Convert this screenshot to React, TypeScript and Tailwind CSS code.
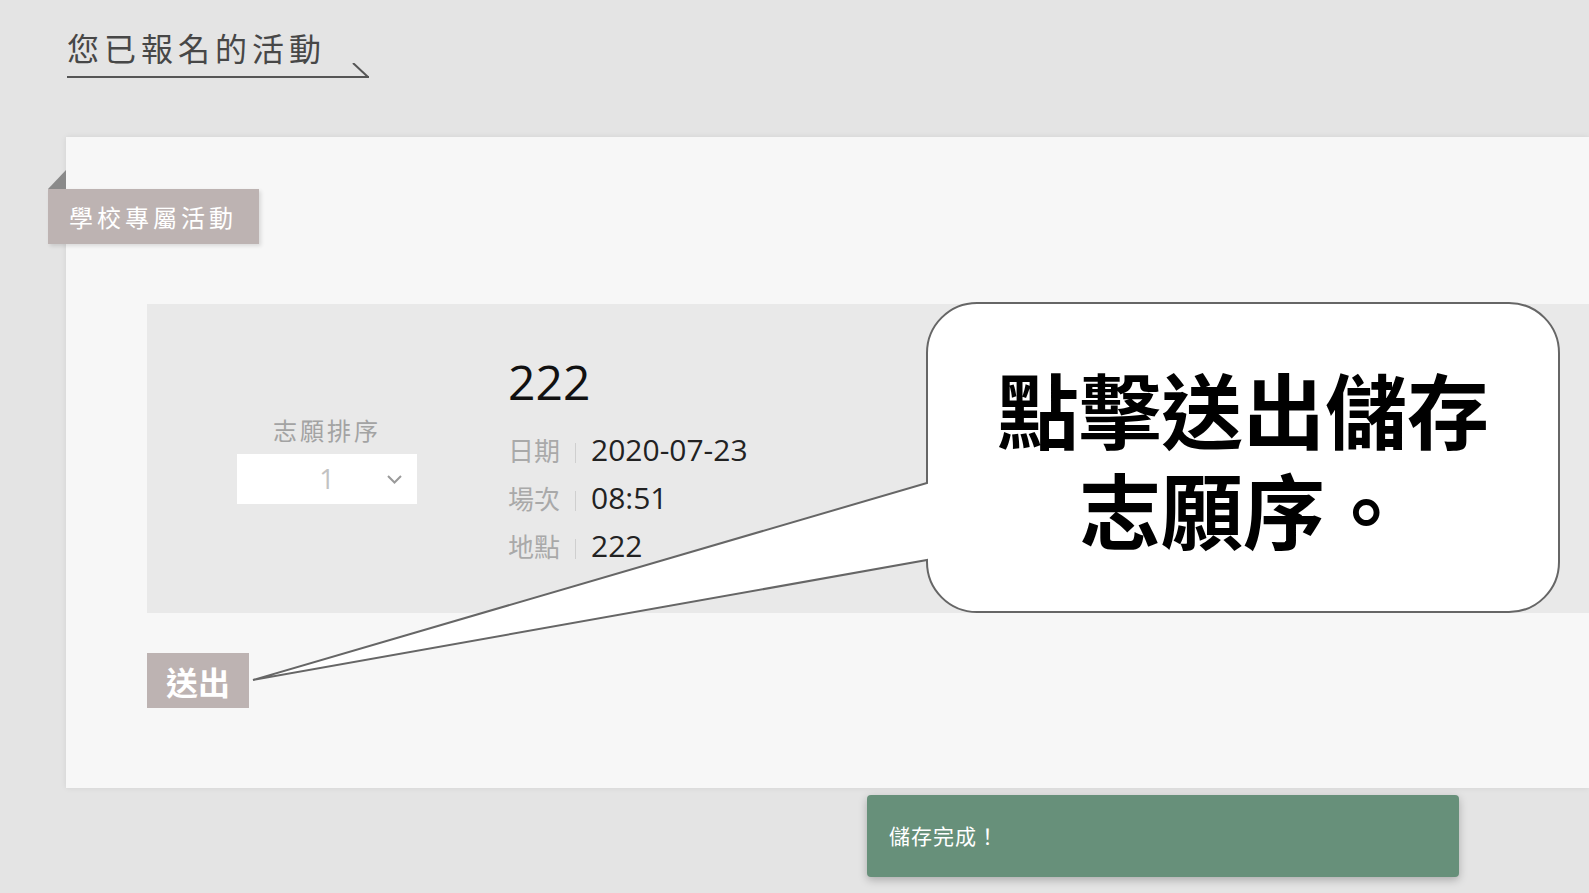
import React from "react";

export default function App() {
  return (
    <div className="relative min-h-screen w-full overflow-hidden bg-[#e4e4e4] font-['Open_Sans','Noto_Sans_CJK_TC',sans-serif]">
      {/* Page heading */}
      <header className="pl-[67px] pt-[31px]">
        <div className="font-['Noto_Sans_CJK_TC',sans-serif] text-[32px] leading-[32px] tracking-[5px] text-[#474747]">
          您已報名的活動
        </div>
        <svg width="303" height="16" viewBox="0 0 303 16" className="block">
          <line x1="0" y1="14" x2="302" y2="14" stroke="#555" strokeWidth="2" />
          <line x1="286" y1="0" x2="301" y2="14" stroke="#555" strokeWidth="2" />
        </svg>
      </header>

      {/* Panel */}
      <section className="ml-[66px] mt-[58px] h-[651px] bg-[#f7f7f7] pt-[52px] shadow-[0_0_6px_rgba(0,0,0,0.08)]">
        <div className="relative -ml-[18px] flex h-[55px] w-[211px] items-center bg-[#bdb3b2] pl-[21px] font-['Noto_Sans_CJK_TC',sans-serif] text-[24px] tracking-[4px] text-white shadow-[2px_2px_4px_rgba(0,0,0,0.12)]">
          <span className="absolute left-0 top-[-19px] h-0 w-0 border-b-[19px] border-l-[18px] border-b-[#8a8a8a] border-l-transparent" />
          學校專屬活動
        </div>

        {/* Activity card */}
        <div className="ml-[81px] mt-[60px] flex h-[309px] items-center bg-[#e9e9e9] pl-[90px]">
          <div className="flex w-[180px] flex-col items-center">
            <div className="font-['Noto_Sans_CJK_TC',sans-serif] text-[24px] leading-[34px] tracking-[3px] text-[#a3a3a3]">
              志願排序
            </div>
            <div className="relative mt-[7px] flex h-[50px] w-[180px] items-center justify-center bg-white">
              <span className="text-[27px] text-[#c2c2c2]">1</span>
              <svg width="15" height="9" viewBox="0 0 15 9" className="absolute right-[15px] top-[21px]">
                <polyline points="1,1 7.5,7.5 14,1" fill="none" stroke="#9a9a9a" strokeWidth="2" />
              </svg>
            </div>
          </div>

          <div className="ml-[91px] flex flex-col pt-[6px]">
            <div className="text-[48px] leading-[56px] text-[#111]">222</div>
            <div className="mt-[16px] flex flex-col">
              {[
                ["日期", "2020-07-23"],
                ["場次", "08:51"],
                ["地點", "222"],
              ].map(([k, v]) => (
                <div key={k} className="h-[48px] text-[30px] leading-[48px] whitespace-nowrap">
                  <span className="font-['Noto_Sans_CJK_TC',sans-serif] text-[26px] text-[#a9a9a9]">{k}</span>
                  <span className="mx-[15px] inline-block h-[20px] w-px bg-[#cfcfcf] align-[-2px]" />
                  <span className="text-[#222]">{v}</span>
                </div>
              ))}
            </div>
          </div>
        </div>

        <button className="ml-[81px] mt-[40px] flex h-[55px] w-[102px] items-center justify-center bg-[#bdb3b2] font-['Noto_Sans_CJK_TC',sans-serif] text-[32px] font-bold text-white">
          送出
        </button>
      </section>

      {/* Callout overlay */}
      <svg
        width="1589"
        height="893"
        viewBox="0 0 1589 893"
        className="pointer-events-none absolute left-0 top-0"
      >
        <path
          d="M977,303 H1509 A50,50 0 0 1 1559,353 V562 A50,50 0 0 1 1509,612 H977 A50,50 0 0 1 927,562 V560 L253,680 L927,483 V353 A50,50 0 0 1 977,303 Z"
          fill="#ffffff"
          stroke="#666666"
          strokeWidth="2"
          strokeLinejoin="miter"
        />
      </svg>
      <div className="pointer-events-none absolute left-[927px] top-[303px] flex h-[309px] w-[632px] flex-col items-center justify-center text-center font-['Noto_Sans_CJK_TC',sans-serif] text-[82px] font-bold leading-[100px] text-black">
        <div className="h-[100px] overflow-visible">點擊送出儲存</div>
        <div className="h-[100px] overflow-visible">志願序。</div>
      </div>

      {/* Toast */}
      <div className="absolute left-[867px] top-[795px] flex h-[82px] w-[592px] items-center rounded-[4px] bg-[#67907a] pl-[22px] font-['Noto_Sans_CJK_TC',sans-serif] text-[21px] tracking-[1px] text-white shadow-[0_3px_8px_rgba(0,0,0,0.25)]">
        儲存完成！
      </div>
    </div>
  );
}
